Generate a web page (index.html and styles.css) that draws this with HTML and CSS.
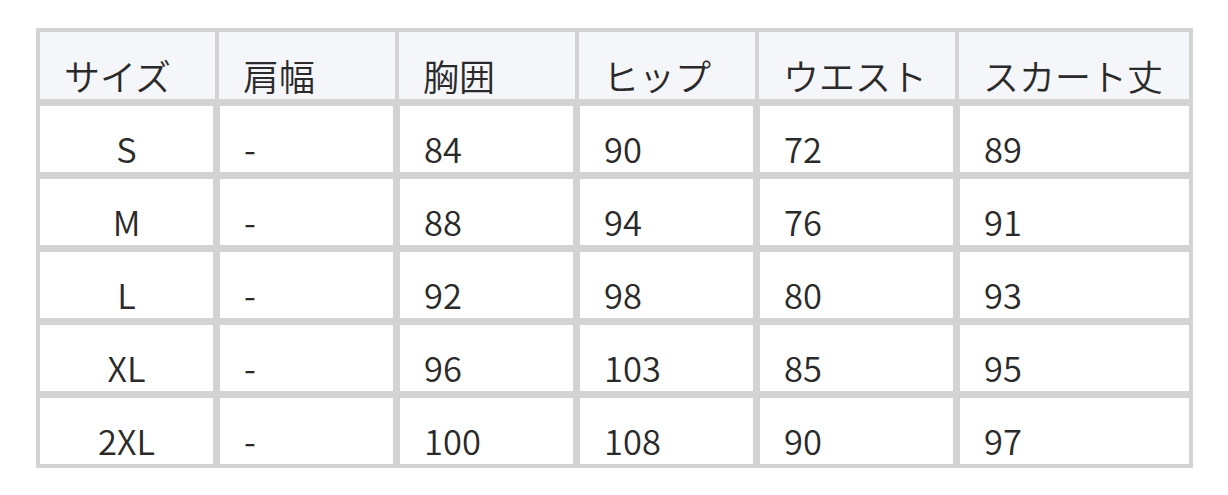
FILE: index.html
```html
<!DOCTYPE html>
<html lang="ja">
<head>
<meta charset="utf-8">
<title>サイズ表</title>
<link rel="stylesheet" href="styles.css">
</head>
<body>
<div class="wrap">
<table class="size-table">
<colgroup>
<col class="c1"><col class="c2"><col class="c3"><col class="c4"><col class="c5"><col class="c6">
</colgroup>
<thead>
<tr><th>サイズ</th><th>肩幅</th><th>胸囲</th><th>ヒップ</th><th>ウエスト</th><th>スカート丈</th></tr>
</thead>
<tbody>
<tr><td>S</td><td>-</td><td>84</td><td>90</td><td>72</td><td>89</td></tr>
<tr><td>M</td><td>-</td><td>88</td><td>94</td><td>76</td><td>91</td></tr>
<tr><td>L</td><td>-</td><td>92</td><td>98</td><td>80</td><td>93</td></tr>
<tr><td>XL</td><td>-</td><td>96</td><td>103</td><td>85</td><td>95</td></tr>
<tr><td>2XL</td><td>-</td><td>100</td><td>108</td><td>90</td><td>97</td></tr>
</tbody>
</table>
</div>
</body>
</html>
```

FILE: styles.css
```css
html, body {
  margin: 0;
  padding: 0;
  background: #ffffff;
}

.wrap {
  padding: 28px 35px 0 36px;
}

.size-table {
  width: 1157px;
  table-layout: fixed;
  border-collapse: separate;
  border-spacing: 4px;
  background: #d3d3d3;
  font-family: "Noto Sans CJK JP", "Noto Sans", sans-serif;
  color: #2a2a2a;
}

.c1 { width: 175px; }
.c2 { width: 176px; }
.c3 { width: 176px; }
.c4 { width: 176px; }
.c5 { width: 196px; }
.c6 { width: 230px; }

.size-table th,
.size-table td {
  box-sizing: border-box;
  text-align: left;
  font-weight: 350;
  white-space: nowrap;
  vertical-align: top;
}

.size-table th {
  height: 67px;
  padding: 20px 24px 0 24px;
  font-size: 36px;
  line-height: 47px;
  background: #f5f6fa;
}

.size-table td {
  height: 69px;
  padding: 19px 24px 0 24px;
  font-size: 34.5px;
  line-height: 47px;
  background: #ffffff;
  border-top: 3px solid #d3d3d3;
  border-left: 1px solid #d3d3d3;
  border-right: 2px solid #d3d3d3;
}

.size-table td:first-child {
  border-left: 0;
  text-align: center;
}

.size-table td:last-child {
  border-right: 0;
}
```
